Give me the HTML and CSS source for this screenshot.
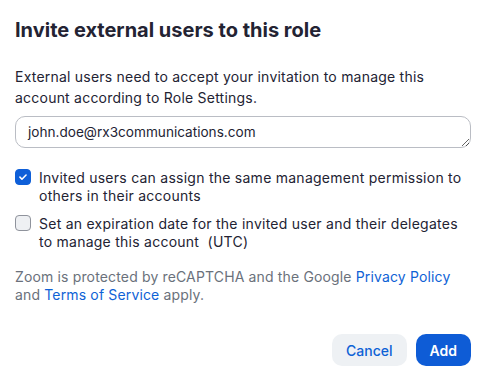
FILE: index.html
```html
<!DOCTYPE html>
<html>
<head>
    <meta charset="utf-8" />
    <title>Invite external users</title>
    <link rel="stylesheet" href="styles.css">
</head>
<body>
    <div class="dialog">
        <h2 class="title">Invite external users to this role</h2>
        <p class="intro">External users need to accept your invitation to manage this account according to Role Settings.</p>
        <textarea class="emails" rows="1">john.doe@rx3communications.com</textarea>

        <label class="check">
            <input type="checkbox" checked />
            <span class="box"></span>
            <span>Invited users can assign the same management permission to others in their accounts</span>
        </label>
        <label class="check">
            <input type="checkbox" />
            <span class="box"></span>
            <span>Set an expiration date for the invited user and their delegates to manage this account &nbsp;(UTC)</span>
        </label>

        <p class="captcha">Zoom is protected by reCAPTCHA and the Google <a href="#">Privacy Policy</a> and <a href="#">Terms of Service</a> apply.</p>

        <div class="actions">
            <button class="btn btnCancel">Cancel</button>
            <button class="btn btnAdd">Add</button>
        </div>
    </div>
</body>
</html>
```

FILE: styles.css
```css
body {
    margin: 0;
    background: #fff;
    font-family: Inter, "Liberation Sans", sans-serif;
    color: #222326;
}

.dialog {
    padding: 16px 19px 12px 15px;
}

.title {
    margin: 0;
    font-size: 20px;
    line-height: 28px;
    font-weight: 700;
    color: #232333;
}

.intro {
    margin: 22px 0 0;
    font-size: 14px;
    line-height: 21px;
    letter-spacing: 0.22px;
    color: #232333;
}

.emails {
    display: block;
    box-sizing: border-box;
    width: 100%;
    height: 32px;
    margin-top: 8px;
    padding: 6px 12px;
    border: 1px solid #babdc4;
    border-radius: 10px;
    font-family: inherit;
    font-size: 13.6px;
    line-height: 18px;
    color: #232333;
    resize: vertical;
    outline: none;
}

.check {
    display: flex;
    gap: 8px;
    margin-top: 21px;
    font-size: 14px;
    line-height: 18px;
    letter-spacing: 0.25px;
    color: #232333;
    cursor: pointer;
}

.check + .check {
    margin-top: 10px;
}

.check input {
    display: none;
}

.check .box {
    flex: none;
    box-sizing: border-box;
    width: 16px;
    height: 16px;
    border: 1px solid #8f939c;
    border-radius: 4px;
    background: #eef0f3;
}

.check input:checked + .box {
    border-color: #0e5fd8;
    background: #0e5fd8 url("data:image/svg+xml;utf8,<svg xmlns='http://www.w3.org/2000/svg' width='16' height='16' viewBox='0 0 16 16'><path d='M4.5 8.2l2.3 2.3 4.7-4.8' fill='none' stroke='white' stroke-width='1.8' stroke-linecap='round' stroke-linejoin='round'/></svg>") center / 14px no-repeat;
}

.captcha {
    margin: 17px 0 0;
    font-size: 14px;
    line-height: 18px;
    letter-spacing: 0.15px;
    color: #6a717b;
}

.captcha a {
    color: #0e62d6;
    text-decoration: none;
}

.actions {
    display: flex;
    justify-content: flex-end;
    gap: 9px;
    margin-top: 30px;
}

.btn {
    height: 32px;
    padding: 0 14px;
    border: none;
    border-radius: 10px;
    font-family: inherit;
    font-size: 14px;
    cursor: pointer;
}

.btnCancel {
    background: #eef1f4;
    color: #0e62d6;
    font-weight: 500;
}

.btnAdd {
    background: #0e5cd6;
    color: #fff;
    font-weight: 600;
}
```
